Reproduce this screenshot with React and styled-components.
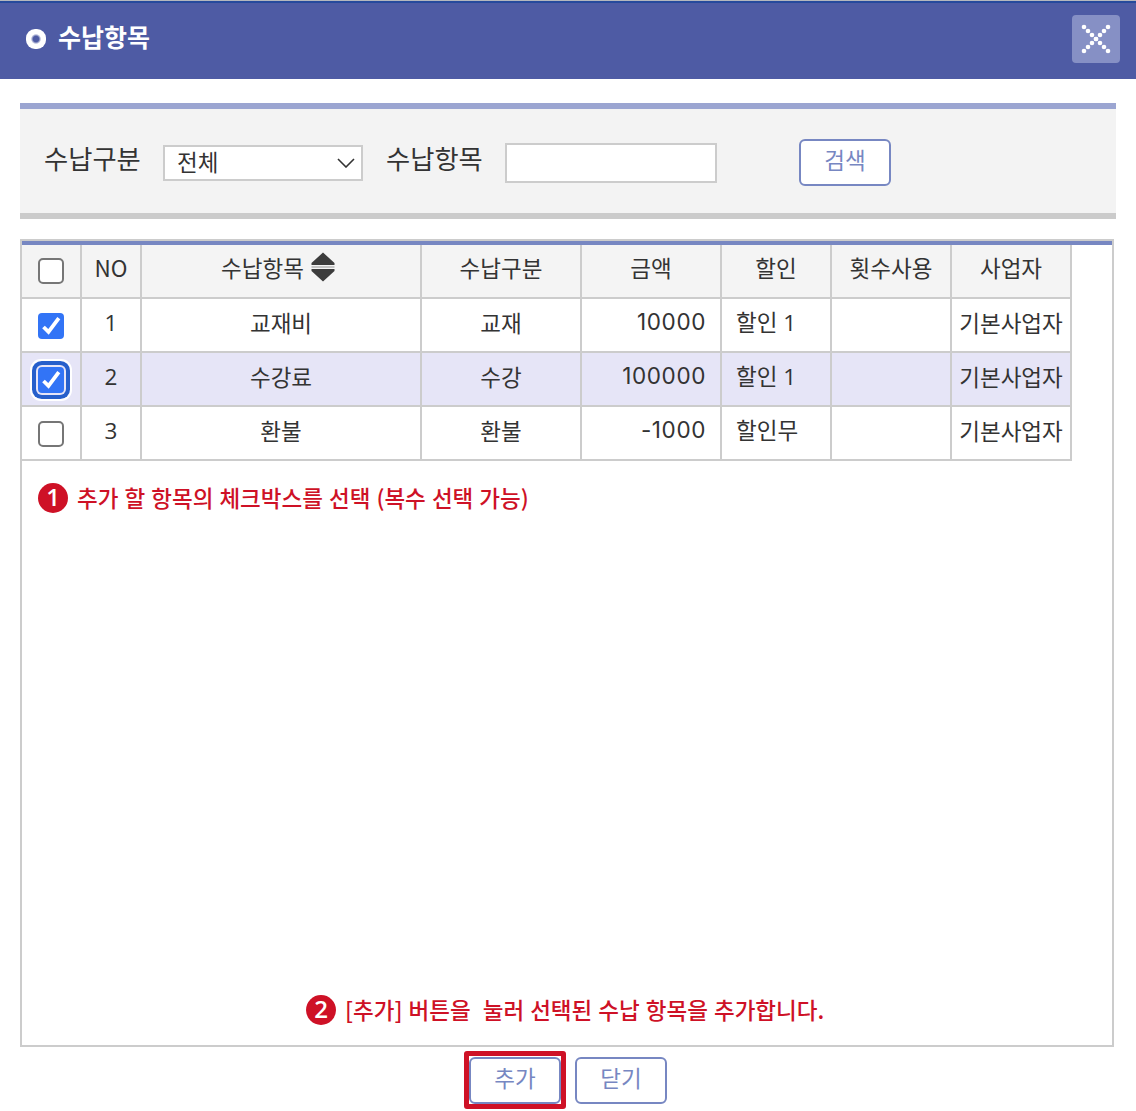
import React, { useState } from "react";
import styled, { createGlobalStyle, css } from "styled-components";

const GlobalStyle = createGlobalStyle`
  *, *::before, *::after { box-sizing: border-box; }
  body {
    margin: 0;
    background: #fff;
    color: #333;
    font-family: "Noto Sans CJK KR", sans-serif;
    font-size: 22.5px;
    line-height: 32px;
  }
  input, button { font: inherit; }
`;

const Dialog = styled.div`
  width: 1136px;
  height: 1111px;
  display: flex;
  flex-direction: column;
  overflow: hidden;
`;

const TitleBar = styled.header`
  height: 79px;
  flex: none;
  display: flex;
  align-items: center;
  padding: 0 16px 2px 26px;
  background: #4e5ba4;
  border-top: 1px solid #b5b7bd;
  box-shadow: inset 0 2px 0 #264a9c;
`;

const Bullet = styled.span`
  width: 20px;
  height: 20px;
  border-radius: 9px;
  background: radial-gradient(circle, #4e5ba4 2.8px, #fff 5.2px);
`;

const Title = styled.h1`
  margin: -7px auto 0 12px;
  color: #fff;
  font-size: 25px;
  font-weight: 700;
  line-height: 36px;
`;

const CloseButton = styled.button`
  width: 48px;
  height: 48px;
  padding: 0;
  border: 0;
  border-radius: 4px;
  background: #8690c5;
  svg { display: block; }
`;

const SearchPanel = styled.section`
  height: 116px;
  flex: none;
  margin: 24px 20px 20px;
  padding: 0 24px;
  display: flex;
  align-items: center;
  background: #f3f3f3;
  border-top: 6px solid #9ba5d1;
  border-bottom: 6px solid #cbcbcb;
`;

const Label = styled.label`
  width: ${(p) => p.$width}px;
  margin-top: -7px;
  font-size: 26.3px;
  line-height: 36px;
  white-space: nowrap;
`;

const SelectBox = styled.div`
  width: 200px;
  height: 36px;
  margin: 4px 23px 0 0;
  padding: 0 6px 5px 12px;
  display: flex;
  align-items: center;
  justify-content: space-between;
  background: #fff;
  border: 2px solid #ccc;
  svg { margin-top: 5px; }
`;

const TextInput = styled.input`
  width: 212px;
  height: 40px;
  margin: 4px 82px 0 0;
  padding: 0 8px;
  background: #fff;
  border: 2px solid #ccc;
  outline: 0;
`;

const Button = styled.button`
  position: relative;
  width: 92px;
  height: 47px;
  margin-top: ${(p) => p.$top || 0}px;
  padding: 0 0 8px;
  color: #7787c2;
  background: #fff;
  border: 2px solid #7787c2;
  border-radius: 6px;
  line-height: 32px;
`;

const Highlight = styled.span`
  position: absolute;
  inset: -8px -7px -7px -7px;
  border: 5px solid #ce1126;
  border-radius: 3px;
`;

const Content = styled.main`
  width: 1094px;
  height: 808px;
  flex: none;
  margin-left: 20px;
  display: flex;
  flex-direction: column;
  border: 2px solid #ccc;
`;

const Grid = styled.div`
  border-top: 4px solid #7787c2;
`;

const Row = styled.div`
  width: 1050px;
  height: 54px;
  display: grid;
  grid-template-columns: 60px 60px 280px 160px 140px 110px 120px 120px;
  background: ${(p) => (p.$head ? "#f4f4f4" : p.$active ? "#e6e5f7" : "#fff")};
`;

const Cell = styled.div`
  display: flex;
  align-items: center;
  justify-content: ${(p) => p.$align || "center"};
  padding: ${(p) => (p.$align ? "0 14px 7px 14px" : p.$title ? "0 0 9px" : "0 0 7px")};
  border-right: 2px solid #ccc;
  border-bottom: 2px solid #ccc;
  white-space: nowrap;
  ${(p) => p.$latin && css`
    padding-bottom: 4px;
    font-family: "Open Sans", "Noto Sans CJK KR", sans-serif;
  `}
  ${(p) => p.$amount && css`
    font-family: Inter, "Noto Sans CJK KR", sans-serif;
    font-size: 22.5px;
    letter-spacing: 0.6px;
  `}
  ${(p) => p.$check && css`
    padding: ${p.$head ? 0 : 1}px 0 0;
  `}
  ${(p) => p.$sortable && css`
    padding-right: 6px;
  `}
  svg { margin: 0 0 0 7px; }
`;

const Checkbox = styled.button`
  width: 26px;
  height: 26px;
  padding: 0;
  border: ${(p) => (p.$checked ? "0" : "2px solid #767676")};
  border-radius: ${(p) => (p.$checked ? 4 : 5)}px;
  background: ${(p) => (p.$checked ? "#3274f6" : "#fff")};
  ${(p) => p.$focused && css`
    box-shadow: 0 0 0 2px #e6e5f7, 0 0 0 6px #265fcb, 0 0 0 8px #fff;
  `}
  svg { display: block; margin: 0; }
`;

const Note = styled.p`
  display: flex;
  align-items: center;
  margin: ${(p) => p.$margin};
  color: #ce1126;
  font-weight: 500;
  word-spacing: 1px;
  line-height: 30px;
  white-space: pre;
`;

const NoteText = styled.span`
  margin-top: -3px;
`;

const Step = styled.b`
  width: 30px;
  height: 30px;
  margin-right: 9px;
  border-radius: 50%;
  background: #ce1126;
  color: #fff;
  font-family: "Open Sans", sans-serif;
  font-size: 24px;
  font-weight: 600;
  line-height: 28px;
  text-align: center;
`;

const Footer = styled.footer`
  display: flex;
  justify-content: center;
  gap: 14px;
  padding-top: 10px;
`;

const dots = [-12, -8, -4, 0, 4, 8, 12];

function CloseIcon() {
  return (
    <svg width="48" height="48" viewBox="0 0 48 48" fill="#fff">
      {dots.map((d) => (
        <React.Fragment key={d}>
          <circle cx={24 + d} cy={24 + d} r="2.3" />
          <circle cx={24 + d} cy={24 - d} r="2.3" />
        </React.Fragment>
      ))}
    </svg>
  );
}

function Check({ checked, focused, onToggle }) {
  return (
    <Checkbox role="checkbox" aria-checked={checked} $checked={checked} $focused={focused} onClick={onToggle}>
      {checked && (
        <svg width="26" height="26" viewBox="0 0 26 26" fill="none">
          <path d="M5.500 14L10.500 18.800L20.800 5.200" stroke="#fff" strokeWidth="3.800" />
        </svg>
      )}
    </Checkbox>
  );
}

function SortIcon() {
  return (
    <svg width="24" height="30" viewBox="0 0 24 30" fill="#3c3c3c">
      <path d="M12 .5L23.500 11v2H.5V11zM12 29.500L23.500 19v-2H.5V19z" />
      <path d="M.5 14h23v2H.5z" fill="#c4c4c4" />
    </svg>
  );
}

const rows = [
  { no: 1, name: "교재비", kind: "교재", amount: "10000", discount: "할인 1" },
  { no: 2, name: "수강료", kind: "수강", amount: "100000", discount: "할인 1" },
  { no: 3, name: "환불", kind: "환불", amount: "-1000", discount: "할인무" },
];

export default function App() {
  const [selected, setSelected] = useState([1, 2]);
  const toggle = (no) =>
    setSelected((s) => (s.includes(no) ? s.filter((n) => n !== no) : [...s, no]));
  const all = selected.length === rows.length;

  return (
    <Dialog>
      <GlobalStyle />
      <TitleBar>
        <Bullet />
        <Title>수납항목</Title>
        <CloseButton><CloseIcon /></CloseButton>
      </TitleBar>
      <SearchPanel>
        <Label $width={119}>수납구분</Label>
        <SelectBox>
          전체
          <svg width="18" height="10" viewBox="0 0 18 10" fill="none">
            <path d="M1 1l8 8 8-8" stroke="#333" strokeWidth="1.600" />
          </svg>
        </SelectBox>
        <Label $width={119}>수납항목</Label>
        <TextInput />
        <Button $top={3}>검색</Button>
      </SearchPanel>
      <Content>
        <Grid>
          <Row $head>
            <Cell $check $head>
              <Check checked={all} onToggle={() => setSelected(all ? [] : rows.map((r) => r.no))} />
            </Cell>
            <Cell $title>NO</Cell>
            <Cell $title $sortable>수납항목<SortIcon /></Cell>
            <Cell $title>수납구분</Cell>
            <Cell $title>금액</Cell>
            <Cell $title>할인</Cell>
            <Cell $title>횟수사용</Cell>
            <Cell $title>사업자</Cell>
          </Row>
          {rows.map((r) => (
            <Row key={r.no} $active={r.no === 2}>
              <Cell $check>
                <Check checked={selected.includes(r.no)} focused={r.no === 2} onToggle={() => toggle(r.no)} />
              </Cell>
              <Cell $latin>{r.no}</Cell>
              <Cell>{r.name}</Cell>
              <Cell>{r.kind}</Cell>
              <Cell $align="flex-end" $amount>{r.amount}</Cell>
              <Cell $align="flex-start" $latin>{r.discount}</Cell>
              <Cell />
              <Cell>기본사업자</Cell>
            </Row>
          ))}
        </Grid>
        <Note $margin="22px 0 0 16px"><Step>1</Step><NoteText>추가 할 항목의 체크박스를 선택 (복수 선택 가능)</NoteText></Note>
        <Note $margin="auto 0 20px 284px"><Step>2</Step><NoteText>[추가] 버튼을  눌러 선택된 수납 항목을 추가합니다.</NoteText></Note>
      </Content>
      <Footer>
        <Button>추가<Highlight /></Button>
        <Button>닫기</Button>
      </Footer>
    </Dialog>
  );
}
